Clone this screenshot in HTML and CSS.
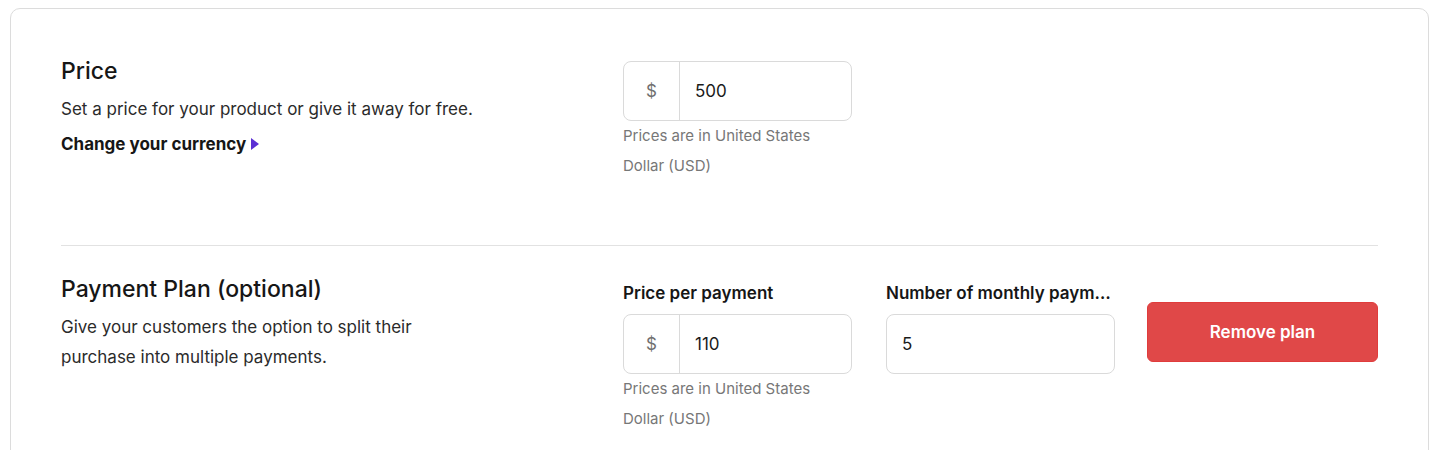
FILE: index.html
```html
<!DOCTYPE html>
<html lang="en">
<head>
  <meta charset="UTF-8">
  <meta name="viewport" content="width=device-width, initial-scale=1.0">
  <title>Pricing</title>
  <link rel="stylesheet" href="styles.css">
</head>
<body>
  <div class="card">
    <!-- Price -->
    <section class="row row-price">
      <div class="info">
        <h2>Price</h2>
        <p>Set a price for your product or give it away for free.</p>
        <a class="currency-link" href="#">Change your currency<span class="caret"></span></a>
      </div>
      <div class="fields">
        <div class="field">
          <div class="input-group">
            <span class="prefix">$</span>
            <input type="text" value="500">
          </div>
          <div class="hint">Prices are in United States Dollar (USD)</div>
        </div>
      </div>
    </section>

    <!-- Payment plan -->
    <section class="row row-plan">
      <div class="info">
        <h2>Payment Plan (optional)</h2>
        <p>Give your customers the option to split their purchase into multiple payments.</p>
      </div>
      <div class="fields">
        <div class="field">
          <label>Price per payment</label>
          <div class="input-group">
            <span class="prefix">$</span>
            <input type="text" value="110">
          </div>
          <div class="hint">Prices are in United States Dollar (USD)</div>
        </div>
        <div class="field">
          <label title="Number of monthly payments">Number of monthly payments</label>
          <div class="input-group">
            <input type="text" value="5">
          </div>
        </div>
        <div class="field">
          <button class="remove-btn">Remove plan</button>
        </div>
      </div>
    </section>
  </div>
</body>
</html>
```

FILE: styles.css
```css
body {
  margin: 0;
  font-family: Inter, "Noto Sans", sans-serif;
  background-color: #fff;
  color: #1a1a1a;
}
.card {
  margin: 8px 11px 0 10px;
  padding: 0 50px;
  height: 600px;
  border: 1px solid #dcdcdc;
  border-radius: 10px;
  box-sizing: border-box;
}
.row {
  display: flex;
}
.row-price {
  padding: 48px 0 64px;
  border-bottom: 1px solid #e2e2e2;
}
.row-price .fields {
  margin-top: 4px;
}
.row-plan {
  padding: 29px 0 0;
}
.row-plan .fields {
  margin-top: 7px;
}
.info {
  flex: 0 0 562px;
}
.info h2 {
  margin: 0 0 9px;
  font-size: 23px;
  font-weight: 500;
  line-height: 28px;
  color: #161616;
}
.info p {
  margin: 0;
  max-width: 425px;
  font-size: 17px;
  line-height: 30px;
  color: #2b2b2b;
}
.currency-link {
  display: inline-block;
  margin-top: 8px;
  font-size: 17px;
  font-weight: 700;
  line-height: 24px;
  color: #161616;
  text-decoration: none;
}
.caret {
  display: inline-block;
  width: 0;
  height: 0;
  margin-left: 5px;
  border-top: 6px solid transparent;
  border-bottom: 6px solid transparent;
  border-left: 8px solid #5b2fd4;
  vertical-align: 0;
}
.fields {
  flex: 1;
  display: grid;
  grid-template-columns: 229px 229px minmax(0, 1fr);
  column-gap: 34px;
  align-items: start;
}
.field {
  min-width: 0;
}
.field label {
  display: block;
  margin-bottom: 10px;
  font-size: 17px;
  font-weight: 600;
  line-height: 22px;
  color: #161616;
  white-space: nowrap;
  overflow: hidden;
  text-overflow: ellipsis;
}
.input-group {
  display: flex;
  height: 60px;
  border: 1px solid #dadada;
  border-radius: 8px;
  box-sizing: border-box;
  overflow: hidden;
}
.prefix {
  flex: 0 0 55px;
  display: flex;
  align-items: center;
  justify-content: center;
  border-right: 1px solid #dadada;
  font-size: 17px;
  color: #707070;
}
.input-group input {
  flex: 1;
  min-width: 0;
  border: none;
  outline: none;
  padding: 0 15px;
  font-family: inherit;
  font-size: 17px;
  color: #1a1a1a;
  background: transparent;
}
.hint {
  max-width: 210px;
  font-size: 15px;
  line-height: 30px;
  color: #777;
}
.remove-btn {
  width: calc(100% + 2px);
  height: 60px;
  margin: 20px 0 0 -2px;
  border: 1px solid #e03c3c;
  border-radius: 6px;
  background-color: #e04848;
  color: #fff;
  font-family: inherit;
  font-size: 17px;
  font-weight: 600;
  cursor: pointer;
}
```
